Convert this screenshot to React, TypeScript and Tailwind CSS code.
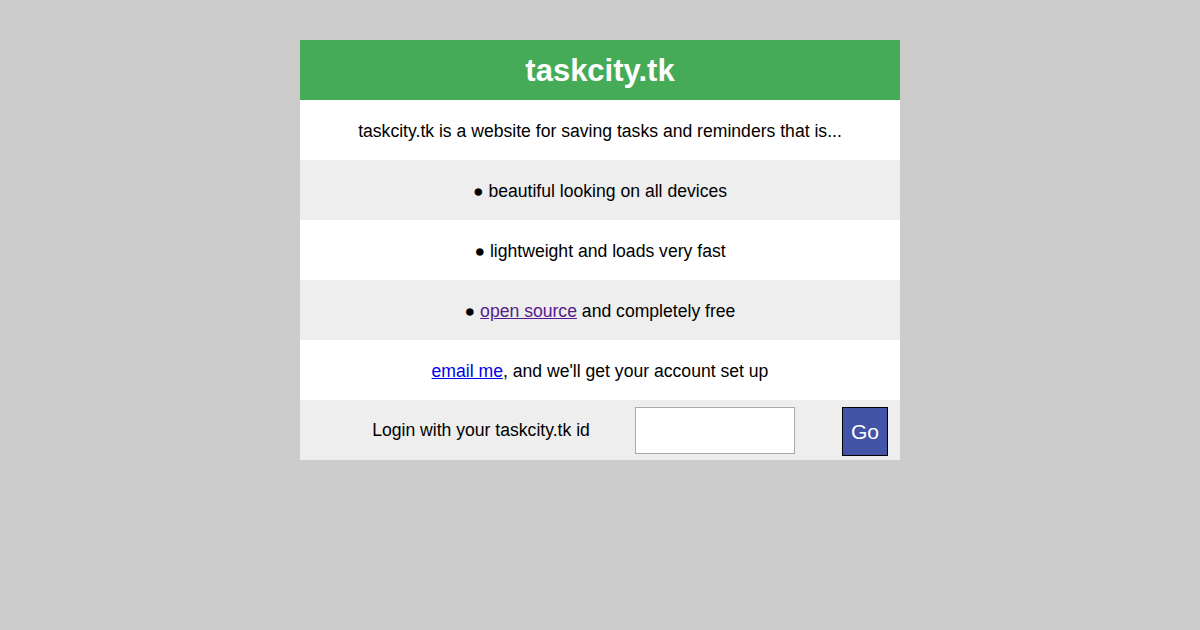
const rows = [
  { bg: 'bg-white', content: <>taskcity.tk is a website for saving tasks and reminders that is...</> },
  { bg: 'bg-[#eeeeee]', content: <>● beautiful looking on all devices</> },
  { bg: 'bg-white', content: <>● lightweight and loads very fast</> },
  {
    bg: 'bg-[#eeeeee]',
    content: (
      <>
        ● <a href="#" className="text-[#551a8b] underline">open source</a> and completely free
      </>
    ),
  },
  {
    bg: 'bg-white',
    content: (
      <>
        <a href="#" className="text-[#0000ee] underline">email me</a>, and we'll get your account set up
      </>
    ),
  },
]

export default function App() {
  return (
    <div className="min-h-[630px] bg-[#cccccc] pt-10 font-['Liberation_Sans',Arial,sans-serif]">
      <div className="mx-auto w-[600px]">
        {/* header */}
        <div className="flex h-[60px] items-center justify-center bg-[#45ab56] pt-[2px]">
          <h1 className="text-[31px] font-bold text-white">taskcity.tk</h1>
        </div>

        {rows.map((row, i) => (
          <div
            key={i}
            className={`flex h-[60px] items-center justify-center pt-[2px] text-[17.6px] text-black ${row.bg}`}
          >
            <p>{row.content}</p>
          </div>
        ))}

        {/* login row */}
        <div className="flex h-[60px] items-start bg-[#eeeeee] pl-[62px] text-[17.6px] text-black">
          <span className="w-[238px] self-center pt-[1px] text-center">Login with your taskcity.tk id</span>
          <input
            type="text"
            className="ml-[35px] mt-[7px] h-[47px] w-[160px] border border-[#aaaaaa] bg-white outline-none"
          />
          <button className="ml-[47px] mt-[7px] h-[49px] w-[46px] border border-black bg-[#4353a6] pt-[1px] text-[21px] text-white">
            Go
          </button>
        </div>
      </div>
    </div>
  )
}
